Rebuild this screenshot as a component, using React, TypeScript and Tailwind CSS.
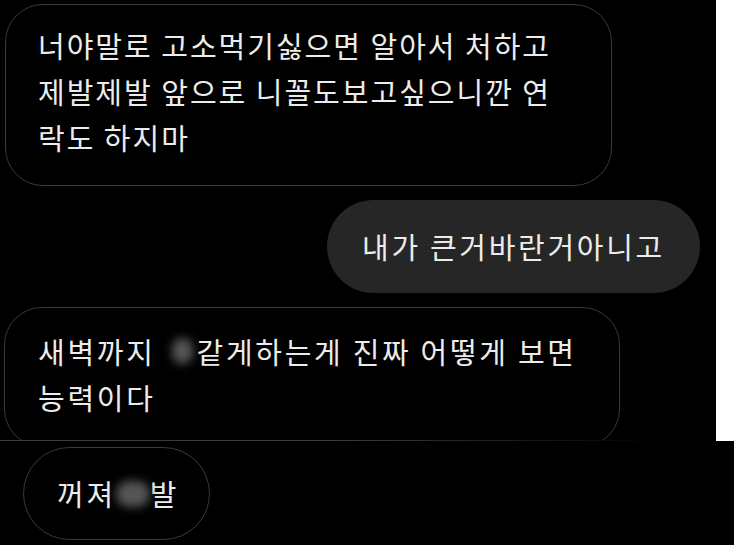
const font = { fontFamily: '"Noto Sans CJK KR", "Noto Sans", sans-serif' };

const Blur = ({ w }: { w: number }) => (
    <span className="inline-block align-middle shrink-0" style={{ width: w }}>
        <span className="block h-[26px] w-full rounded-full bg-[#555555] blur-[5px]" />
    </span>
);

export default function App() {
    return (
        <div className="w-[734px] h-[545px] bg-black overflow-hidden text-[#ececec] text-[29px] tracking-[2.7px]" style={font}>
            <div className="flex h-[440px]">
                <div className="w-[716px] h-full overflow-hidden flex flex-col">
                    <div className="ml-[5px] mt-[4px] w-[607px] h-[182px] shrink-0 rounded-[38px] border-[1.5px] border-[#3a3a3a] pl-[32px] pt-[17px] leading-[46px] whitespace-nowrap tracking-[2px]">
                        <div>너야말로 고소먹기싫으면 알아서 처하고</div>
                        <div>제발제발 앞으로 니꼴도보고싶으니깐 연</div>
                        <div>락도 하지마</div>
                    </div>

                    <div className="self-end mr-[16px] mt-[14px] h-[93px] shrink-0 rounded-full bg-[#262626] pl-[35px] pr-[35px] flex items-center whitespace-nowrap">
                        내가 큰거바란거아니고
                    </div>

                    <div className="ml-[4px] mt-[14px] w-[616px] h-[140px] shrink-0 rounded-[38px] border-[1.5px] border-[#3a3a3a] pl-[33px] pt-[20px] leading-[46px] whitespace-nowrap">
                        <div className="flex items-center">
                            <span>새벽까지</span>
                            <span className="ml-[16px] mr-[4px] flex"><Blur w={21} /></span>
                            <span>같게하는게 진짜 어떻게 보면</span>
                        </div>
                        <div>능력이다</div>
                    </div>
                </div>
                <div className="w-[18px] h-[441px] bg-white" />
            </div>

            <div className="h-px w-[663px] bg-gradient-to-r from-[#3c3c3c] via-[#3c3c3c] to-transparent" />

            <div className="pt-[6px] pl-[23px]">
                <div className="w-[187px] h-[93px] rounded-full border-[1.5px] border-[#3a3a3a] pl-[33px] flex items-center whitespace-nowrap">
                    <span>꺼져</span>
                    <Blur w={34} />
                    <span>발</span>
                </div>
            </div>
        </div>
    );
}
